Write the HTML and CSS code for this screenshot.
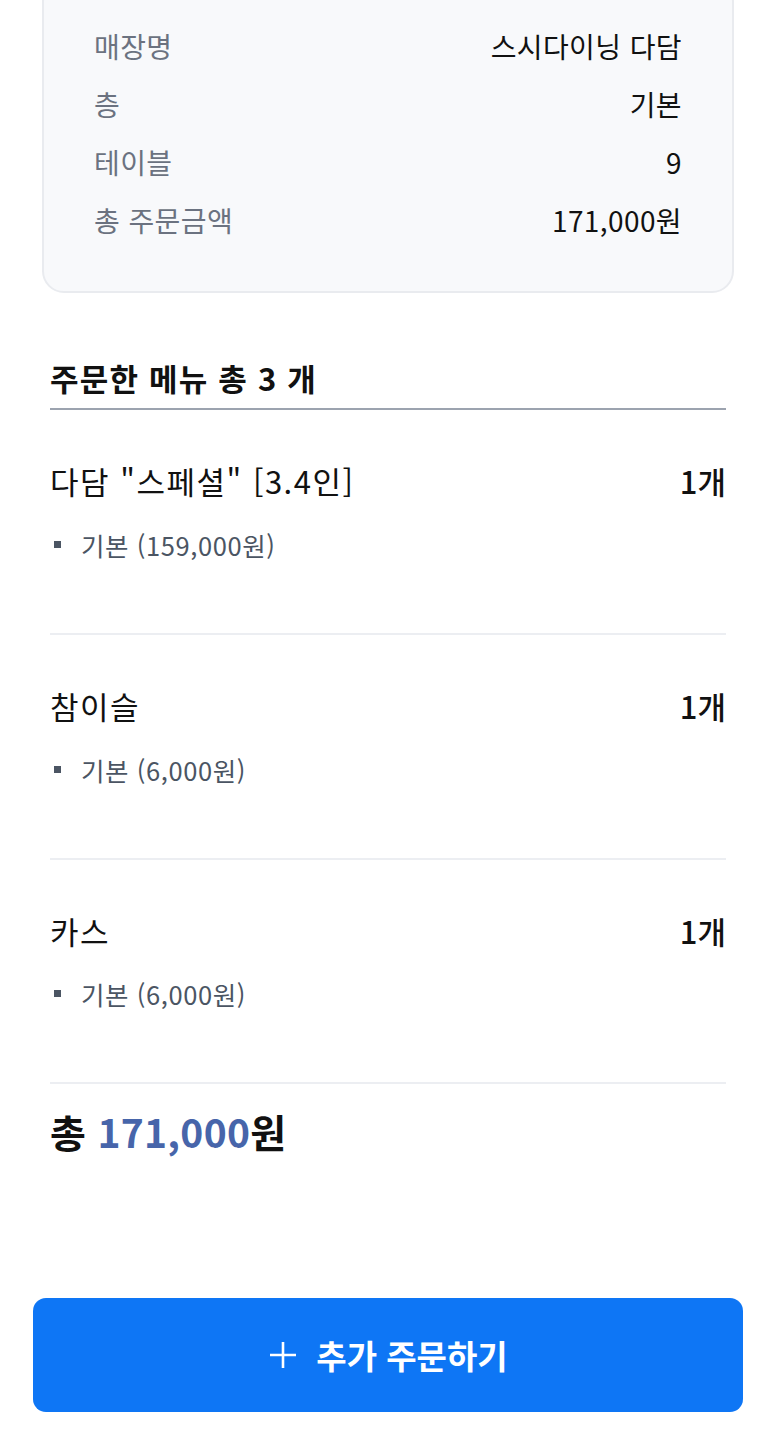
FILE: index.html
```html
<!DOCTYPE html>
<html lang="ko">
<head>
<meta charset="utf-8">
<link rel="stylesheet" href="styles.css">
</head>
<body>
<div class="page">
  <section class="info-card">
    <div class="info-row"><span class="label">매장명</span><span class="value">스시다이닝 다담</span></div>
    <div class="info-row"><span class="label">층</span><span class="value">기본</span></div>
    <div class="info-row"><span class="label">테이블</span><span class="value">9</span></div>
    <div class="info-row"><span class="label">총 주문금액</span><span class="value">171,000원</span></div>
  </section>

  <section class="orders">
    <h2 class="orders-title">주문한 메뉴 총 3 개</h2>
    <div class="item">
      <div class="item-head"><span class="item-name">다담 "스페셜" [3.4인]</span><span class="item-qty">1개</span></div>
      <div class="item-opt"><span class="bullet"></span>기본 (159,000원)</div>
    </div>
    <div class="item">
      <div class="item-head"><span class="item-name">참이슬</span><span class="item-qty">1개</span></div>
      <div class="item-opt"><span class="bullet"></span>기본 (6,000원)</div>
    </div>
    <div class="item">
      <div class="item-head"><span class="item-name">카스</span><span class="item-qty">1개</span></div>
      <div class="item-opt"><span class="bullet"></span>기본 (6,000원)</div>
    </div>
    <div class="total">총 <span class="total-num">171,000</span>원</div>
  </section>

  <div class="footer">
    <button class="add-btn" type="button">
      <svg class="plus" width="30" height="30" viewBox="0 0 30 30"><path d="M15 2V28M2 15H28" stroke="#fff" stroke-width="2.6" fill="none"/></svg>
      <span>추가 주문하기</span>
    </button>
  </div>
</div>
</body>
</html>
```
FILE: styles.css
```css
* { box-sizing: border-box; }
html, body { margin: 0; padding: 0; background: #fff; }
body {
  font-family: "Noto Sans CJK KR", "Noto Sans", sans-serif;
  color: #111;
  width: 773px;
  height: 1434px;
  overflow: hidden;
}
.page { display: flex; flex-direction: column; }

.info-card {
  margin: -20px 39px 0 42px;
  background: #f8f9fb;
  border: 2px solid #e9ebef;
  border-radius: 22px;
  padding: 35px 50px 42px;
  display: flex;
  flex-direction: column;
}
.info-row {
  display: flex;
  justify-content: space-between;
  align-items: center;
  height: 58px;
  font-size: 28px;
  letter-spacing: 0.4px;
}
.label { color: #6b7280; }
.value { color: #111; }

.orders { padding: 0 47px 0 50px; margin-top: 64px; }
.orders-title {
  margin: 0;
  font-size: 31px;
  font-weight: 700;
  line-height: 42px;
  padding-bottom: 9px;
  letter-spacing: 1.2px;
  border-bottom: 2px solid #9ca3af;
}
.item {
  padding: 50px 0 74px;
  border-bottom: 2px solid #eceef2;
}
.item:nth-of-type(n+3) .item-opt { margin-top: 28px; }
.item-head {
  display: flex;
  justify-content: space-between;
  align-items: center;
  height: 40px;
}
.item-name { font-size: 31px; color: #111; letter-spacing: 1.5px; }
.item-qty { font-size: 31px; font-weight: 500; }
.item-opt {
  display: flex;
  align-items: center;
  margin-top: 29px;
  height: 30px;
  font-size: 25.5px;
  letter-spacing: 0.6px;
  color: #4b5563;
}
.bullet {
  width: 7px; height: 7px;
  background: #4b5563;
  margin: 0 20px 0 4px;
}
.total {
  margin-top: 23px;
  font-size: 39px;
  font-weight: 700;
  line-height: 48px;
  letter-spacing: 0.3px;
  color: #111;
}
.total-num { color: #4765aa; }

.footer { padding: 0 30px 0 33px; margin-top: 143px; }
.add-btn {
  width: 100%;
  height: 114px;
  border: none;
  border-radius: 13px;
  background: #0e76f5;
  color: #fff;
  font-family: inherit;
  font-size: 33px;
  font-weight: 600;
  display: flex;
  align-items: center;
  justify-content: center;
  gap: 18px;
  padding: 0;
}
.plus { display: block; }
```
